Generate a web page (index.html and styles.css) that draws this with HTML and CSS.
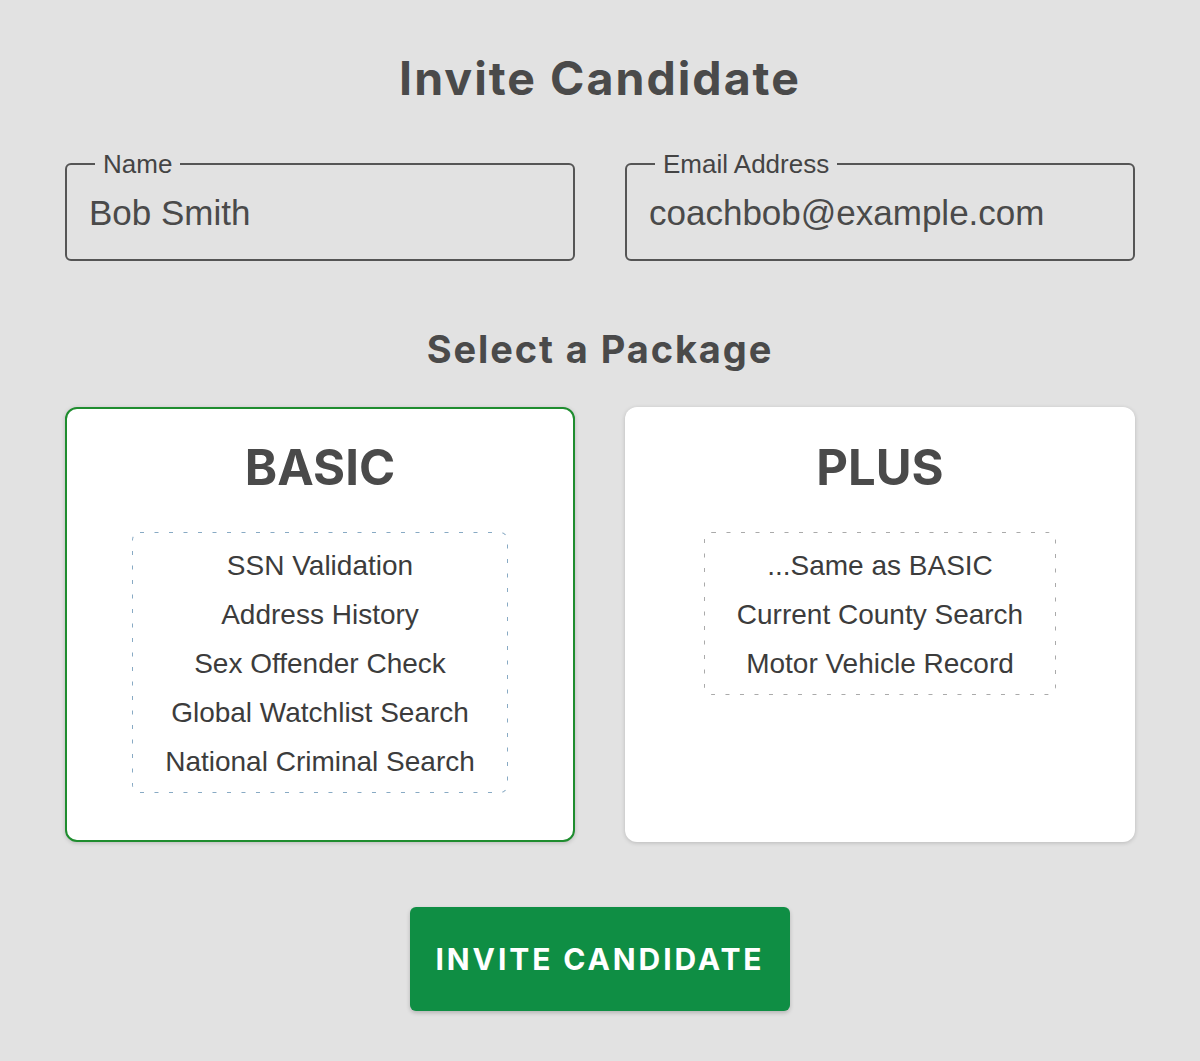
FILE: index.html
```html
<!DOCTYPE html>
<html lang="en">
<head>
<meta charset="utf-8">
<title>Invite Candidate</title>
<link rel="stylesheet" href="styles.css">
</head>
<body>
<main class="page">
  <h1 class="title">Invite Candidate</h1>
  <div class="fields">
    <fieldset class="field">
      <legend class="field-label">Name</legend>
      <input class="field-input" type="text" value="Bob Smith">
    </fieldset>
    <fieldset class="field">
      <legend class="field-label">Email Address</legend>
      <input class="field-input" type="text" value="coachbob@example.com">
    </fieldset>
  </div>
  <h2 class="subtitle">Select a Package</h2>
  <div class="packages">
    <div class="card card--selected">
      <h3 class="card-title">BASIC</h3>
      <ul class="features features--active">
        <li>SSN Validation</li>
        <li>Address History</li>
        <li>Sex Offender Check</li>
        <li>Global Watchlist Search</li>
        <li>National Criminal Search</li>
      </ul>
    </div>
    <div class="card">
      <h3 class="card-title">PLUS</h3>
      <ul class="features">
        <li>...Same as BASIC</li>
        <li>Current County Search</li>
        <li>Motor Vehicle Record</li>
      </ul>
    </div>
  </div>
  <div class="actions">
    <button class="btn" type="button">INVITE CANDIDATE</button>
  </div>
</main>
</body>
</html>
```

FILE: styles.css
```css
* { box-sizing: border-box; }

html, body {
  margin: 0;
  padding: 0;
}

body {
  background: #e2e2e2;
  font-family: "Liberation Sans", Arial, sans-serif;
  color: #3a3a3a;
  min-height: 1061px;
}

.page {
  width: 1070px;
  margin: 0 auto;
  padding-top: 50px;
}

.title {
  margin: 0;
  text-align: center;
  font-family: Inter, Lato, sans-serif;
  font-weight: 700;
  font-size: 46.5px;
  line-height: 56px;
  letter-spacing: 2px;
  color: #4a4a4a;
}

.fields {
  display: grid;
  grid-template-columns: 1fr 1fr;
  gap: 50px;
  margin-top: 43px;
}

.field {
  margin: 0;
  min-width: 0;
  border: 2px solid #555;
  border-radius: 6px;
  padding: 0 22px 26px 22px;
}

.field-label {
  margin-left: 6px;
  padding: 0 8px;
  font-size: 26px;
  line-height: 30px;
  color: #444;
}

.field-input {
  display: block;
  width: 100%;
  margin-top: 14px;
  padding: 0;
  border: 0;
  background: transparent;
  font-family: "Liberation Sans", Arial, sans-serif;
  font-size: 35px;
  line-height: 40px;
  height: 40px;
  color: #4a4a4a;
  outline: none;
}

.subtitle {
  margin: 64px 0 0;
  text-align: center;
  font-family: Inter, Lato, sans-serif;
  font-weight: 700;
  font-size: 38px;
  line-height: 48px;
  letter-spacing: 1.9px;
  color: #4a4a4a;
}

.packages {
  display: grid;
  grid-template-columns: 1fr 1fr;
  gap: 50px;
  margin-top: 34px;
}

.card {
  background: #fff;
  border-radius: 12px;
  box-shadow: 0 1px 4px rgba(0, 0, 0, 0.18);
  padding: 31px 20px 49px;
  display: flex;
  flex-direction: column;
  align-items: center;
}

.card--selected {
  border: 2px solid #1f8d2f;
  padding-top: 29px;
  padding-bottom: 47px;
}

.card-title {
  margin: 0;
  font-family: Inter, Lato, sans-serif;
  font-weight: 700;
  font-size: 49px;
  line-height: 60px;
  color: #4a4a4a;
}

.features {
  list-style: none;
  margin: 34px 0 0;
  padding: 9px 33px 7px;
  text-align: center;
  font-size: 28px;
  line-height: 49px;
  color: #3c3c3c;
  border-radius: 8px;
  background-image: url("data:image/svg+xml,%3Csvg xmlns='http://www.w3.org/2000/svg'%3E%3Crect width='100%25' height='100%25' rx='8' ry='8' fill='none' stroke='%23aaaaaa' stroke-width='2' stroke-dasharray='4 10.5'/%3E%3C/svg%3E");
}

.features--active {
  background-image: url("data:image/svg+xml,%3Csvg xmlns='http://www.w3.org/2000/svg'%3E%3Crect width='100%25' height='100%25' rx='8' ry='8' fill='none' stroke='%2388aac4' stroke-width='2' stroke-dasharray='4 10.5'/%3E%3C/svg%3E");
}

.actions {
  display: flex;
  justify-content: center;
  margin-top: 65px;
}

.btn {
  height: 104px;
  width: 380px;
  border: 0;
  border-radius: 6px;
  background: #0f8e44;
  color: #fff;
  font-family: Inter, Lato, sans-serif;
  font-weight: 700;
  font-size: 30px;
  letter-spacing: 2.9px;
  padding: 0;
  box-shadow: 0 2px 4px rgba(0, 0, 0, 0.2);
  cursor: pointer;
}
```
